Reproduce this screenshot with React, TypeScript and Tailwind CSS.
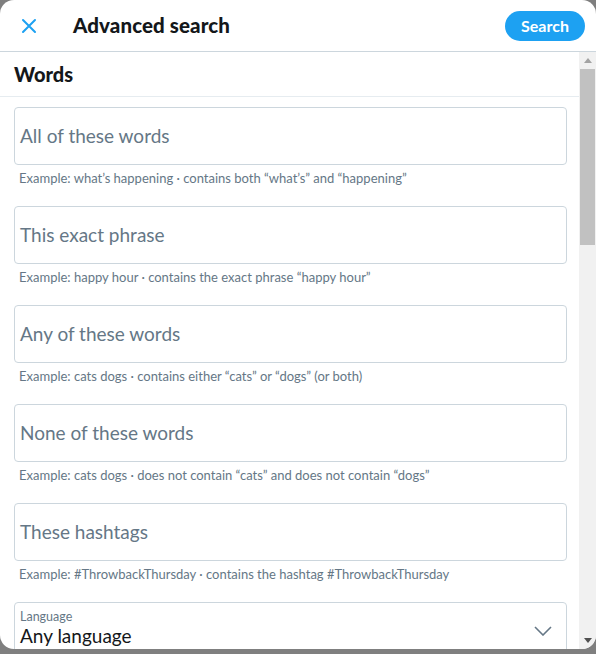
import React from "react";

const fields = [
  {
    placeholder: "All of these words",
    hint: "Example: what’s happening · contains both “what’s” and “happening”",
  },
  {
    placeholder: "This exact phrase",
    hint: "Example: happy hour · contains the exact phrase “happy hour”",
  },
  {
    placeholder: "Any of these words",
    hint: "Example: cats dogs · contains either “cats” or “dogs” (or both)",
  },
  {
    placeholder: "None of these words",
    hint: "Example: cats dogs · does not contain “cats” and does not contain “dogs”",
  },
  {
    placeholder: "These hashtags",
    hint: "Example: #ThrowbackThursday · contains the hashtag #ThrowbackThursday",
  },
];

const FieldBox = ({ placeholder, hint }: { placeholder: string; hint: string }) => (
  <div className="mb-[20px]">
    <div className="h-[58px] rounded-[4px] border border-[#ccd6dd] flex items-center px-[5px]">
      <span className="text-[19px] text-[#657786]">{placeholder}</span>
    </div>
    <p className="pt-[5px] pl-[5px] text-[13px] leading-[16px] text-[#657786]">{hint}</p>
  </div>
);

// fake classic scrollbar, the panel does not really scroll
const Scrollbar = () => (
  <div className="w-[17px] shrink-0 bg-[#f1f1f1] flex flex-col items-center">
    <div className="h-[17px] flex items-center justify-center">
      <svg width="8" height="5" viewBox="0 0 8 5">
        <path d="M0 5 L4 0 L8 5 Z" fill="#a3a3a3" />
      </svg>
    </div>
    <div className="w-[15px] h-[176px] bg-[#c1c1c1]" />
    <div className="flex-1" />
    <div className="h-[17px] flex items-center justify-center">
      <svg width="8" height="5" viewBox="0 0 8 5">
        <path d="M0 0 L8 0 L4 5 Z" fill="#505050" />
      </svg>
    </div>
  </div>
);

export default function App() {
  return (
    <div
      className="w-[596px] h-[654px] bg-[#7f7f7f] overflow-hidden"
      style={{ fontFamily: "Lato, 'Noto Sans', sans-serif" }}
    >
      <div className="h-[649px] bg-white rounded-[14px] overflow-hidden flex flex-col">
        {/* header */}
        <div className="h-[52px] shrink-0 border-b border-[#ccd6dd] flex items-center pl-[20px] pr-[11px]">
          <button className="w-[18px] h-[18px] flex items-center justify-center text-[#1da1f2]">
            <svg width="16" height="16" viewBox="0 0 16 16" fill="none">
              <path d="M2 2 L14 14 M14 2 L2 14" stroke="currentColor" strokeWidth="2" strokeLinecap="round" />
            </svg>
          </button>
          <h1 className="ml-[35px] text-[20.5px] font-black text-[#14171a] tracking-[0.1px]">
            Advanced search
          </h1>
          <button className="ml-auto h-[30px] w-[80px] rounded-full bg-[#1da1f2] text-white text-[16px] font-bold">
            Search
          </button>
        </div>

        {/* body */}
        <div className="flex-1 flex min-h-0">
          <div className="flex-1 min-w-0">
            <div className="h-[45px] border-b border-[#e6ecf0] flex items-center px-[14px]">
              <h2 className="text-[20px] font-black text-[#14171a]">Words</h2>
            </div>
            <div className="pt-[10px] pl-[14px] pr-[12px]">
              {fields.map((f) => (
                <FieldBox key={f.placeholder} placeholder={f.placeholder} hint={f.hint} />
              ))}
              <div className="h-[58px] rounded-[4px] border border-[#ccd6dd] flex items-center pl-[5px] pr-[14px]">
                <div className="flex-1 self-start pt-[6px]">
                  <p className="text-[12.5px] leading-[16px] text-[#657786]">Language</p>
                  <p className="text-[19px] leading-[22px] text-[#14171a]">Any language</p>
                </div>
                <svg width="18" height="10" viewBox="0 0 18 10" fill="none">
                  <path d="M1 1 L9 9 L17 1" stroke="#657786" strokeWidth="1.6" />
                </svg>
              </div>
            </div>
          </div>
          <Scrollbar />
        </div>
      </div>
    </div>
  );
}
